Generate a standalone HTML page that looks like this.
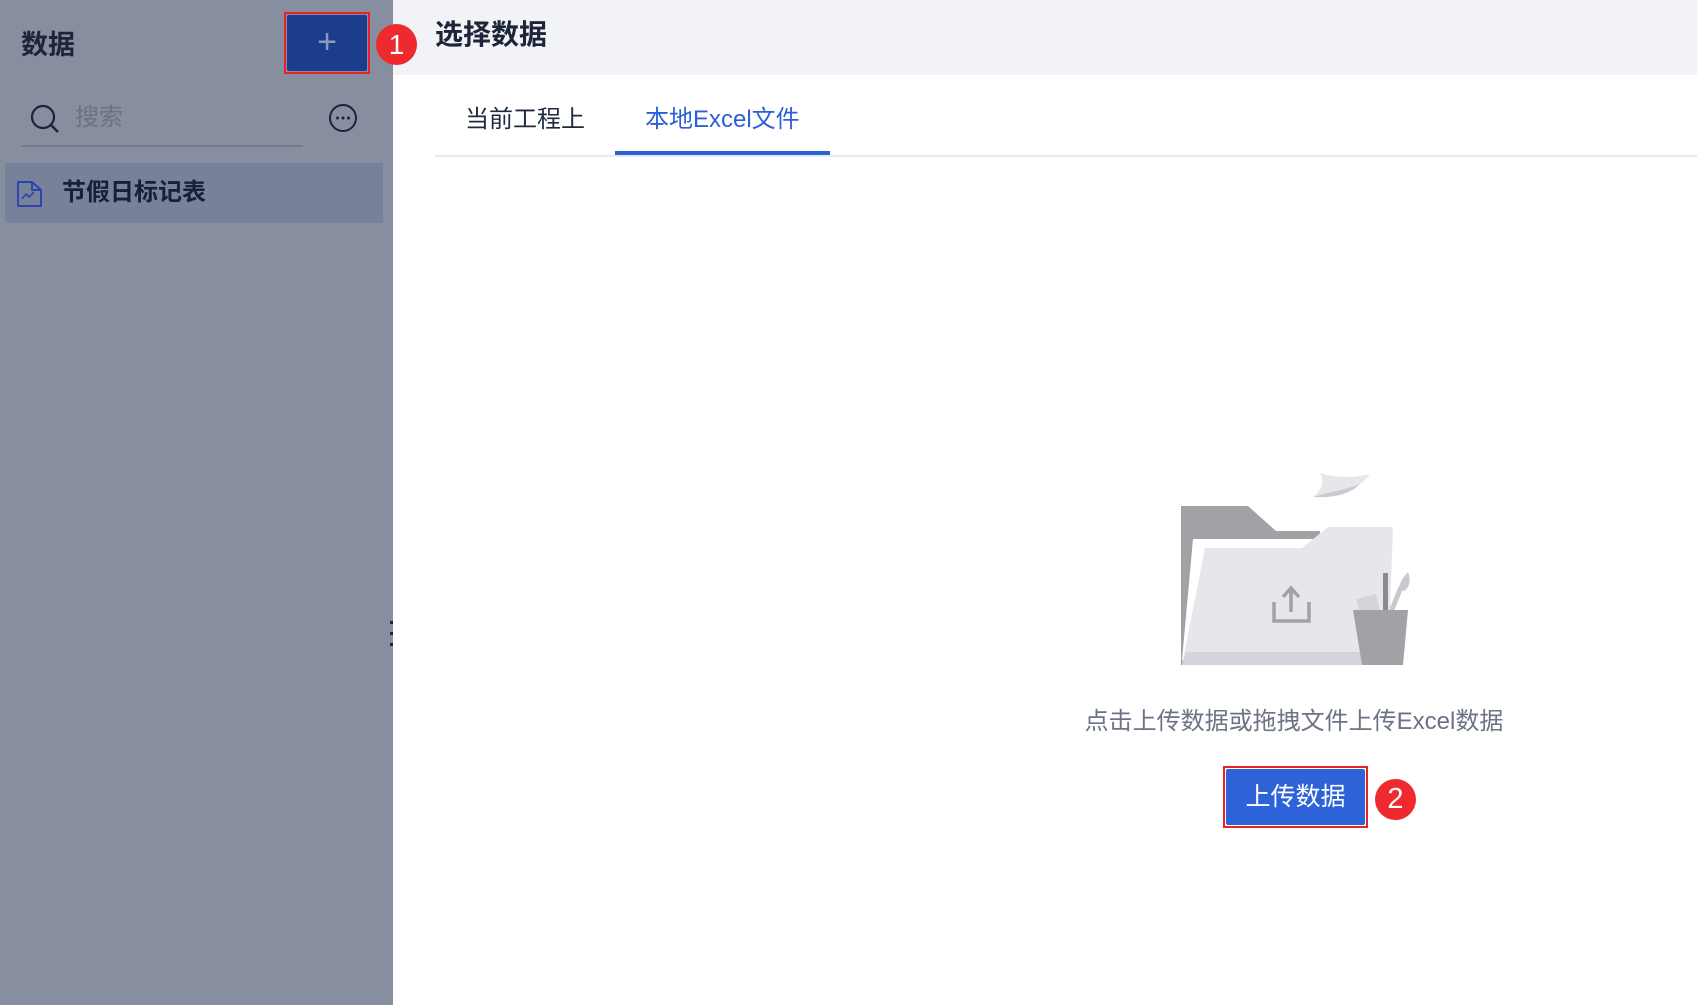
<!DOCTYPE html>
<html><head><meta charset="utf-8"><style>
*{margin:0;padding:0;box-sizing:border-box}
body{width:1697px;height:1005px;position:relative;overflow:hidden;background:#fff;font-family:"Liberation Sans","Noto Sans CJK SC",sans-serif}
.a{position:absolute;white-space:nowrap}
</style></head><body>
<div class="a" style="left:0;top:0;width:393px;height:1005px;background:#868e9f"></div>
<div class="a" style="left:393px;top:0;width:1304px;height:75px;background:#f2f3f7"></div>
<div class="a" style="left:21px;top:27px;font-size:27px;font-weight:bold;color:#1d2639;line-height:36px">数据</div>
<div class="a" style="left:284px;top:12px;width:86px;height:62px;border:2px solid #e8202a"></div>
<div class="a" style="left:287px;top:15px;width:80px;height:56px;background:#1c3d8c;border-radius:2px;color:#8d9ab8;font-size:34px;text-align:center;line-height:54px;font-weight:300">+</div>
<div class="a" style="left:376px;top:24px;width:41px;height:41px;border-radius:50%;background:#ef2a2f;color:#fff;font-size:28px;text-align:center;line-height:41px">1</div>
<div class="a" style="left:435px;top:16px;font-size:28px;font-weight:bold;color:#1d2639;line-height:38px">选择数据</div>
<svg class="a" style="left:28px;top:103px" width="34" height="34" viewBox="0 0 34 34"><circle cx="15" cy="14" r="11" fill="none" stroke="#1b2438" stroke-width="2.2"/><line x1="23" y1="22" x2="30" y2="29" stroke="#1b2438" stroke-width="2.4"/></svg>
<div class="a" style="left:75px;top:102px;font-size:24px;color:#6a7284;line-height:32px">搜索</div>
<div class="a" style="left:21px;top:145px;width:282px;height:2px;background:#737c8e"></div>
<svg class="a" style="left:328px;top:103px" width="30" height="30" viewBox="0 0 30 30"><circle cx="15" cy="15" r="13" fill="none" stroke="#1b2438" stroke-width="2"/><circle cx="9.5" cy="15" r="1.5" fill="#1b2438"/><circle cx="15" cy="15" r="1.5" fill="#1b2438"/><circle cx="20.5" cy="15" r="1.5" fill="#1b2438"/></svg>
<div class="a" style="left:5px;top:163px;width:378px;height:60px;background:#78819a"></div>
<svg class="a" style="left:16px;top:180px" width="27" height="28" viewBox="0 0 27 28"><path d="M2 2H16V10H25V26H2Z M16 2L25 10" fill="none" stroke="#2a47a8" stroke-width="2" stroke-linejoin="round"/><path d="M6 19L10 14L13 17L18 12" fill="none" stroke="#2a47a8" stroke-width="1.6"/></svg>
<div class="a" style="left:62px;top:176px;font-size:24px;font-weight:bold;color:#17203a;line-height:34px">节假日标记表</div>
<div class="a" style="left:390px;top:621px;width:3px;height:3px;background:#1b2438"></div>
<div class="a" style="left:390px;top:632px;width:3px;height:3px;background:#1b2438"></div>
<div class="a" style="left:390px;top:643px;width:3px;height:3px;background:#1b2438"></div>
<div class="a" style="left:465px;top:103px;font-size:24px;color:#1f2a3d;line-height:34px">当前工程上</div>
<div class="a" style="left:645px;top:103px;font-size:24px;color:#2d5fd8;line-height:34px">本地Excel文件</div>
<div class="a" style="left:435px;top:155px;width:1262px;height:2px;background:#e6e9ef"></div>
<div class="a" style="left:615px;top:151px;width:215px;height:4px;background:#2d5fd8"></div>
<svg class="a" style="left:1170px;top:460px" width="250" height="215" viewBox="1170 460 250 215">
<polygon points="1181,506 1248,506 1276,531 1320,531 1320,665 1181,665" fill="#a1a2a6"/>
<polygon points="1193,539 1323,539 1323,660 1182,660" fill="#fff"/>
<polygon points="1205,548 1302,548 1328,527 1393,527 1388,665 1182,665" fill="#e6e7ea"/>
<polygon points="1186,652 1390,652 1388,665 1182,665" fill="#d3d5da"/>
<path d="M1320,473 C1335,478 1355,478 1370,474 C1360,488 1340,497 1313,497 C1322,490 1325,482 1320,473Z" fill="#e6e7ea"/>
<path d="M1313,497 C1330,492 1345,490 1360,484 C1350,494 1335,498 1313,497Z" fill="#c9cacf"/>
<path d="M1274,602V621H1309V602" fill="none" stroke="#a1a2a6" stroke-width="3.5"/>
<path d="M1291,612V590M1283,597L1291,588L1299,597" fill="none" stroke="#a1a2a6" stroke-width="3.5"/>
<polygon points="1356,599 1376,594 1380,611 1360,612" fill="#d3d5da"/>
<rect x="1383" y="573" width="5" height="40" fill="#8a8b90"/>
<path d="M1391,612L1401,587" stroke="#c9cacf" stroke-width="5"/>
<path d="M1399,589 C1400,580 1405,576 1408,572 C1411,580 1410,587 1404,591Z" fill="#c9cacf"/>
<polygon points="1353,610 1408,610 1403,665 1362,665" fill="#a1a2a6"/>
</svg>
<div class="a" style="left:1076px;top:705px;width:436px;text-align:center;font-size:24px;color:#6b7385;line-height:34px">点击上传数据或拖拽文件上传Excel数据</div>
<div class="a" style="left:1223px;top:766px;width:145px;height:62px;border:2px solid #e8202a"></div>
<div class="a" style="left:1226px;top:769px;width:139px;height:56px;background:#2d62d9;border-radius:2px;color:#fff;font-size:25px;text-align:center;line-height:56px">上传数据</div>
<div class="a" style="left:1375px;top:779px;width:41px;height:41px;border-radius:50%;background:#ef2a2f;color:#fff;font-size:29px;text-align:center;line-height:41px">2</div>
</body></html>
